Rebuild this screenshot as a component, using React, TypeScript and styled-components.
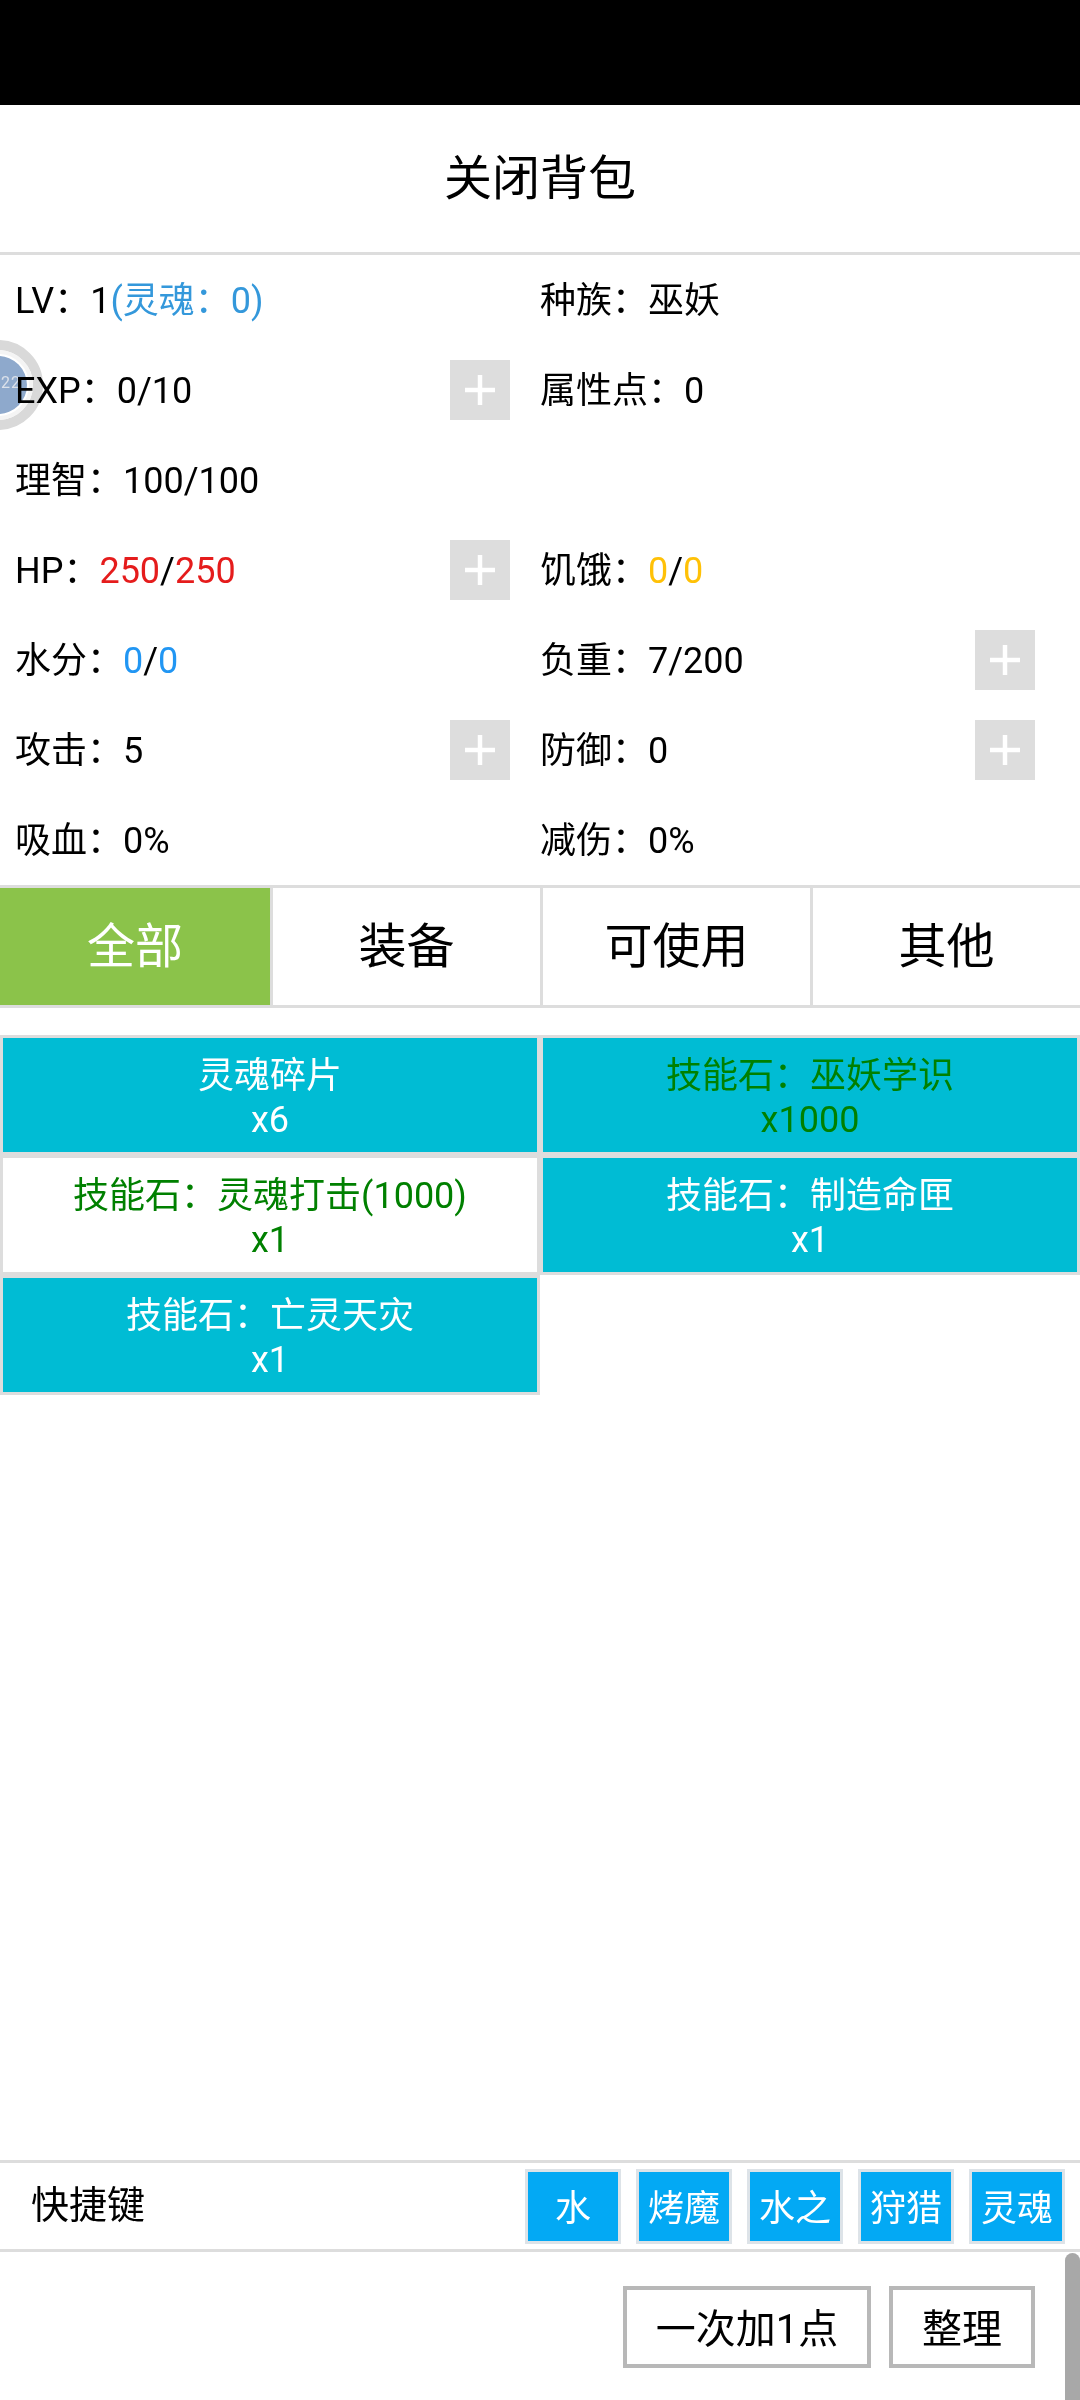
import React from 'react'
import styled, {createGlobalStyle} from 'styled-components'

const GlobalStyle = createGlobalStyle`
  html, body {
    margin: 0;
    padding: 0;
    background: #fff;
  }
  body {
    font-family: Roboto, "Noto Sans CJK SC", sans-serif;
    line-height: 1.2;
    color: #000;
  }
`

const Page = styled.div`
  position: relative;
  display: flex;
  flex-direction: column;
  width: 1080px;
  height: 2400px;
  overflow: hidden;
  background: #fff;
`

const StatusBar = styled.div`
  flex: none;
  height: 105px;
  background: #000;
`

const Title = styled.div`
  flex: none;
  height: 147px;
  display: flex;
  align-items: center;
  justify-content: center;
  font-size: 48px;
  border-bottom: 3px solid #ddd;
`

const Stats = styled.div`
  flex: none;
  display: grid;
  grid-template-columns: 540px 540px;
  grid-auto-rows: 90px;
`

const Stat = styled.div<{$right?: boolean}>`
  display: flex;
  align-items: center;
  justify-content: space-between;
  font-size: 36px;
  padding: ${(p) => (p.$right ? '3px 45px 0 0' : '3px 30px 0 15px')};
`

const Accent = styled.span<{$color: string}>`
  color: ${(p) => p.$color};
`

const PlusButton = styled.div`
  flex: none;
  width: 60px;
  height: 60px;
  margin-bottom: 3px;
  display: flex;
  align-items: center;
  justify-content: center;
  background: #ddd;
`

const Tabs = styled.div`
  flex: none;
  display: grid;
  grid-template-columns: repeat(4, 270px);
  height: 117px;
  border-top: 3px solid #ddd;
  border-bottom: 3px solid #ddd;
`

const Tab = styled.div<{$active?: boolean}>`
  display: flex;
  align-items: center;
  justify-content: center;
  font-size: 48px;
  color: ${(p) => (p.$active ? '#fff' : '#000')};
  background: ${(p) => (p.$active ? '#8bc34a' : '#fff')};
  border-left: 3px solid #ddd;

  &:first-child {
    border-left: none;
  }
`

const Items = styled.div`
  flex: 1;
  display: grid;
  grid-template-columns: 540px 540px;
  grid-auto-rows: 120px;
  padding-top: 27px;
`

const Item = styled.div<{$plain?: boolean; $green?: boolean}>`
  box-sizing: border-box;
  display: flex;
  flex-direction: column;
  align-items: center;
  justify-content: center;
  font-size: 36px;
  line-height: 44px;
  padding-top: 5px;
  border: 3px solid #ddd;
  background: ${(p) => (p.$plain ? '#fff' : '#00bcd4')};
  color: ${(p) => (p.$green ? '#008000' : '#fff')};
`

const ShortcutBar = styled.div`
  flex: none;
  height: 86px;
  display: flex;
  align-items: center;
  justify-content: space-between;
  padding: 0 15px 0 31px;
  border-top: 3px solid #ddd;
  border-bottom: 3px solid #ddd;
`

const ShortcutLabel = styled.div`
  font-size: 38px;
`

const ShortcutList = styled.div`
  display: flex;
  gap: 15px;
`

const Shortcut = styled.div`
  box-sizing: border-box;
  width: 96px;
  height: 75px;
  display: flex;
  align-items: center;
  justify-content: center;
  font-size: 36px;
  padding-top: 8px;
  color: #fff;
  background: #03a9f4;
  border: 3px solid #dde3e8;
`

const Footer = styled.div`
  flex: none;
  height: 148px;
  display: flex;
  justify-content: flex-end;
  gap: 18px;
  padding: 34px 45px 0 0;
  box-sizing: border-box;
`

const FooterButton = styled.div<{$width: number}>`
  box-sizing: border-box;
  width: ${(p) => p.$width}px;
  height: 82px;
  display: flex;
  align-items: center;
  justify-content: center;
  font-size: 40px;
  padding-top: 6px;
  border: 4px solid #b8b8b8;
`

const ScrollThumb = styled.div`
  position: absolute;
  right: 0;
  top: 2253px;
  width: 15px;
  height: 160px;
  border-radius: 8px;
  background: #a8a8a8;
`

const FloatBall = styled.div`
  position: absolute;
  left: -47px;
  top: 340px;
  width: 90px;
  height: 90px;
  mix-blend-mode: multiply;
`

const FloatBallLabel = styled.span`
  position: absolute;
  left: 48px;
  top: 33px;
  font-size: 16px;
  letter-spacing: 1px;
  color: #dbe1ea;
`

const Plus = () => (
  <svg width="30" height="30" viewBox="0 0 30 30">
    <path d="M0 15H30M15 0V30" stroke="#fff" strokeWidth="4.5" />
  </svg>
)

const BallArt = () => (
  <svg width="90" height="90" viewBox="0 0 90 90">
    <circle cx="45" cy="45" r="40" fill="none" stroke="#d9d9d9" strokeWidth="10" />
    <circle cx="45" cy="45" r="33" fill="none" stroke="#f4f4f4" strokeWidth="4" />
    <circle cx="45" cy="45" r="29" fill="#8ea9cc" />
  </svg>
)

export default function App() {
  return (
    <Page>
      <GlobalStyle />
      <StatusBar />
      <Title>关闭背包</Title>
      <Stats>
        <Stat>
          <span>
            LV：1<Accent $color="#3498db">(灵魂：0)</Accent>
          </span>
        </Stat>
        <Stat $right>种族：巫妖</Stat>
        <Stat>
          <span>EXP：0/10</span>
          <PlusButton><Plus /></PlusButton>
        </Stat>
        <Stat $right>属性点：0</Stat>
        <Stat>理智：100/100</Stat>
        <Stat $right />
        <Stat>
          <span>
            HP：<Accent $color="#e51c1c">250</Accent>/<Accent $color="#e51c1c">250</Accent>
          </span>
          <PlusButton><Plus /></PlusButton>
        </Stat>
        <Stat $right>
          <span>
            饥饿：<Accent $color="#ffc107">0</Accent>/<Accent $color="#ffc107">0</Accent>
          </span>
        </Stat>
        <Stat>
          <span>
            水分：<Accent $color="#2196f3">0</Accent>/<Accent $color="#2196f3">0</Accent>
          </span>
        </Stat>
        <Stat $right>
          <span>负重：7/200</span>
          <PlusButton><Plus /></PlusButton>
        </Stat>
        <Stat>
          <span>攻击：5</span>
          <PlusButton><Plus /></PlusButton>
        </Stat>
        <Stat $right>
          <span>防御：0</span>
          <PlusButton><Plus /></PlusButton>
        </Stat>
        <Stat>吸血：0%</Stat>
        <Stat $right>减伤：0%</Stat>
      </Stats>
      <Tabs>
        <Tab $active>全部</Tab>
        <Tab>装备</Tab>
        <Tab>可使用</Tab>
        <Tab>其他</Tab>
      </Tabs>
      <Items>
        <Item>
          <div>灵魂碎片</div>
          <div>x6</div>
        </Item>
        <Item $green>
          <div>技能石：巫妖学识</div>
          <div>x1000</div>
        </Item>
        <Item $plain $green>
          <div>技能石：灵魂打击(1000)</div>
          <div>x1</div>
        </Item>
        <Item>
          <div>技能石：制造命匣</div>
          <div>x1</div>
        </Item>
        <Item>
          <div>技能石：亡灵天灾</div>
          <div>x1</div>
        </Item>
      </Items>
      <ShortcutBar>
        <ShortcutLabel>快捷键</ShortcutLabel>
        <ShortcutList>
          <Shortcut>水</Shortcut>
          <Shortcut>烤魔</Shortcut>
          <Shortcut>水之</Shortcut>
          <Shortcut>狩猎</Shortcut>
          <Shortcut>灵魂</Shortcut>
        </ShortcutList>
      </ShortcutBar>
      <Footer>
        <FooterButton $width={248}>一次加1点</FooterButton>
        <FooterButton $width={146}>整理</FooterButton>
      </Footer>
      <ScrollThumb />
      <FloatBall>
        <BallArt />
        <FloatBallLabel>22</FloatBallLabel>
      </FloatBall>
    </Page>
  )
}
